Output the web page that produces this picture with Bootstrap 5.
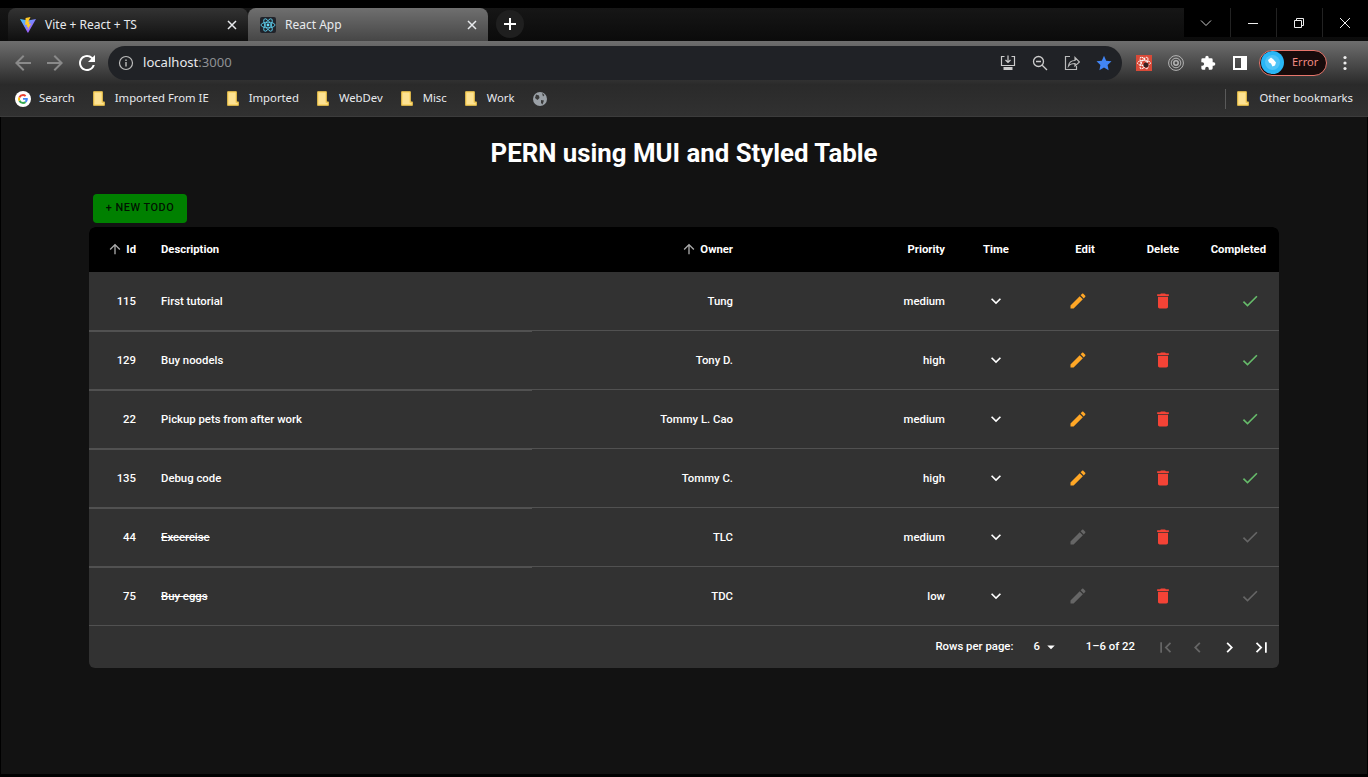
<!DOCTYPE html>
<html lang="en">
<head>
<meta charset="UTF-8">
<meta name="viewport" content="width=device-width, initial-scale=1.0">
<title>React App</title>
<link href="https://cdn.jsdelivr.net/npm/bootstrap@5.3.2/dist/css/bootstrap.min.css" rel="stylesheet">
<style>
html, body { height: 100%; }
body { background: #000; overflow: hidden; font-family: "Roboto", "Liberation Sans", sans-serif; }
.ui-font { font-family: "Noto Sans", "Liberation Sans", sans-serif; font-size: 12px; color: #e8eaed; white-space: nowrap; }

/* tab strip */
.tab-strip { height: 33px; margin-top: 8px; padding-left: 8px; background: linear-gradient(#161616, #0b0b0b); }
.tab-item { width: 240px; height: 33px; border-radius: 8px 8px 0 0; padding: 0 10px 0 12px; }
.tab-off { background: linear-gradient(#333, #0f0f0f); }
.tab-on { background: linear-gradient(#6f6f6f, #464646); }
.tab-fav { width: 16px; height: 16px; margin-right: 9px; flex: none; }
.tab-x { width: 12px; height: 12px; }
.new-tab { width: 28px; height: 28px; margin: 2px 0 0 8px; border-radius: 50%; background: #1f1f1f; }
.win-btns { height: 29px; background: #000; }
.win-btn { width: 46px; height: 29px; padding-right: 2px; border-left: 1px solid #222; }

/* toolbar */
.tool-bar { height: 43px; background: linear-gradient(#6e6e6e, #2b2b2b); padding-left: 11px; }
.tool-btn { width: 24px; height: 24px; margin-right: 8px; flex: none; }
.omni-box { width: 1014px; height: 34px; border-radius: 17px; background: #202226; margin: 0 6px 0 1px; padding: 0 10px 0 10px; }
.omni-icons { column-gap: 16px; }
.omni-text { font-size: 13.1px; margin-left: 9px; padding-top: 1px; }
.omni-port { color: #8e9094; }
.ext-btn { width: 32px; height: 32px; flex: none; }
.err-pill { width: 68px; height: 26px; margin: 0 8px 0 3px; border-radius: 13px; border: 1px solid #e8766c; background: #170b0b; color: #f28b82; font-size: 11px; padding-left: 1px; }
.err-avatar { width: 23px; height: 23px; margin-right: 8px; }

/* bookmarks */
.mark-bar { height: 33px; padding: 0 15px 3px; background: linear-gradient(#2a2a2a, #313131); border-bottom: 1px solid #3c3c3c; font-size: 11.3px; }
.mark-item { margin-right: 18px; }
.mark-ico { width: 12px; height: 15px; margin-right: 10px; flex: none; }
.mark-sep { width: 1px; height: 20px; background: #5a5a5a; margin-right: 11px; }

/* page */
.app-page { height: 657px; margin: 0 1px; background: #121212; padding: 0 88px; }
.app-title { font-size: 25.8px; font-weight: 700; line-height: 30px; color: #fff; text-align: center; padding-top: 21px; margin-bottom: 26px; }
.new-btn { display: block; width: 94px; height: 29px; margin: 0 0 4px 4px; padding: 0; border: 0; border-radius: 4px; background: #008000; color: rgba(0,0,0,.87); font-size: 10.9px; font-weight: 500; letter-spacing: .5px; }

/* table */
.todo-panel { width: 1190px; background: #323232; border-radius: 6px; overflow: hidden; }
.todo-table { table-layout: fixed; margin: 0; color: #fff; border-collapse: separate; border-spacing: 0; --bs-table-bg: transparent; --bs-table-color: #fff; }
.todo-table th, .todo-table td { font-size: 11.35px; line-height: 16px; padding: 0 12px; vertical-align: middle; border: 0; color: #fff; }
.todo-table th { height: 45px; background: #000; font-size: 11.3px; font-weight: 700; }
.todo-table td { height: 59px; font-weight: 500; border-bottom: 1px solid #515151; box-shadow: none; }
.todo-table td.thick-line { box-shadow: 0 1px 0 #515151; }
.todo-table td.done-text { text-decoration: line-through; }
.todo-table .id-cell, .todo-table .last-head { padding-right: 13px; }
.sort-ico { width: 16px; height: 16px; fill: #aaa; margin-right: 3px; vertical-align: -4px; }
.row-ico { width: 20px; height: 20px; display: block; }
.todo-table .edit-cell { padding-right: 26px; }
.edit-cell .row-ico { margin-left: auto; margin-right: auto; }
.todo-table .check-cell { padding-right: 19px; }
.ico-edit { fill: #ffa726; }
.ico-del { fill: #f44336; }
.ico-check { fill: #66bb6a; }
.ico-off { fill: #666; }
.ico-white { fill: #fff; }
.pager-bar { height: 42px; font-size: 11.35px; font-weight: 500; color: #fff; padding-right: 7px; }
.pager-btn { width: 21px; height: 21px; margin-left: 11px; }
.pager-select { margin: 0 26px 0 20px; }
.pager-caret { width: 18px; height: 18px; margin-left: 2px; fill: #fff; }
.pager-first { margin-left: 20px; }
</style>
</head>
<body>
<svg class="d-none">
    <symbol id="i-edit" viewBox="0 0 24 24"><path d="M3 17.25V21h3.75L17.81 9.94l-3.75-3.75L3 17.25zM20.71 7.04c.39-.39.39-1.02 0-1.41l-2.34-2.34c-.39-.39-1.02-.39-1.41 0l-1.83 1.83 3.75 3.75 1.83-1.83z"/></symbol>
    <symbol id="i-del" viewBox="0 0 24 24"><path d="M6 19c0 1.1.9 2 2 2h8c1.1 0 2-.9 2-2V7H6v12zM19 4h-3.5l-1-1h-5l-1 1H5v2h14V4z"/></symbol>
    <symbol id="i-check" viewBox="0 0 24 24"><path d="M9 16.17 4.83 12l-1.42 1.41L9 19 21 7l-1.41-1.41z"/></symbol>
    <symbol id="i-more" viewBox="0 0 24 24"><path d="M16.59 8.59 12 13.17 7.41 8.59 6 10l6 6 6-6z"/></symbol>
    <symbol id="i-up" viewBox="0 0 24 24"><path d="M4 12l1.41 1.41L11 7.83V20h2V7.83l5.58 5.59L20 12l-8-8-8 8z"/></symbol>
    <symbol id="i-folder" viewBox="0 0 12 15"><path d="M.8.8h8.400v10.400h2v3H.8z" fill="#fde293" stroke="#f7cb4d" stroke-width="1.200" stroke-linejoin="round"/></symbol>
</svg>

<div class="d-flex tab-strip">
    <div class="d-flex align-items-center tab-item tab-off">
        <svg class="tab-fav" viewBox="0 0 16 16"><defs><linearGradient id="vg" x1="0" y1="0" x2="1" y2="1"><stop offset="0" stop-color="#41d1ff"/><stop offset="1" stop-color="#bd34fe"/></linearGradient></defs><path d="M0 2l8 1.500L16 2 8.300 15.500q-.4.500-.7 0z" fill="url(#vg)"/><path d="M10.500 0L5.600 1l-.4 7 2-.400-.5 2.500 1.500-.400-.7 3.500 3.500-6.500-2 .400.700-2.500-1.600.300z" fill="#ffca28"/></svg>
        <span class="ui-font flex-grow-1">Vite + React + TS</span>
        <svg class="tab-x" viewBox="0 0 12 12"><path d="M2 2l8 8M10 2l-8 8" stroke="#e8eaed" stroke-width="1.500"/></svg>
    </div>
    <div class="d-flex align-items-center tab-item tab-on">
        <svg class="tab-fav" viewBox="0 0 16 16"><rect width="16" height="16" rx="2" fill="#20232a"/><g fill="none" stroke="#61dafb" stroke-width=".8"><ellipse cx="8" cy="8" rx="7" ry="2.800"/><ellipse cx="8" cy="8" rx="7" ry="2.800" transform="rotate(60 8 8)"/><ellipse cx="8" cy="8" rx="7" ry="2.800" transform="rotate(120 8 8)"/></g><circle cx="8" cy="8" r="1.400" fill="#61dafb"/></svg>
        <span class="ui-font flex-grow-1">React App</span>
        <svg class="tab-x" viewBox="0 0 12 12"><path d="M2 2l8 8M10 2l-8 8" stroke="#e8eaed" stroke-width="1.500"/></svg>
    </div>
    <div class="d-flex align-items-center justify-content-center new-tab">
        <svg width="14" height="14" viewBox="0 0 14 14"><path d="M7 1v12M1 7h12" stroke="#fff" stroke-width="2"/></svg>
    </div>
    <div class="d-flex win-btns ms-auto">
        <div class="d-flex align-items-center justify-content-center win-btn border-0"><svg width="12" height="8" viewBox="0 0 12 8"><path d="M1 1.500l5 5 5-5" fill="none" stroke="#ccc"/></svg></div>
        <div class="d-flex align-items-center justify-content-center win-btn"><svg width="12" height="12" viewBox="0 0 12 12"><path d="M1 6.500h10" stroke="#eee"/></svg></div>
        <div class="d-flex align-items-center justify-content-center win-btn"><svg width="12" height="12" viewBox="0 0 12 12"><path d="M1.500 3.500h7v7h-7zM3.500 3V1.500h7v7H9" fill="none" stroke="#eee"/></svg></div>
        <div class="d-flex align-items-center justify-content-center win-btn"><svg width="12" height="12" viewBox="0 0 12 12"><path d="M1 1l10 10M11 1L1 11" stroke="#eee"/></svg></div>
    </div>
</div>

<div class="d-flex align-items-center tool-bar">
    <svg class="tool-btn" viewBox="0 0 24 24"><path d="M20 11H7.830l5.590-5.590L12 4l-8 8 8 8 1.410-1.410L7.830 13H20z" fill="#8a8a8a"/></svg>
    <svg class="tool-btn" viewBox="0 0 24 24"><path d="M4 11h12.170l-5.590-5.590L12 4l8 8-8 8-1.410-1.410L16.170 13H4z" fill="#8a8a8a"/></svg>
    <svg class="tool-btn" viewBox="0 0 24 24"><path d="M17.650 6.350A7.958 7.958 0 0 0 12 4c-4.420 0-7.990 3.580-7.990 8s3.570 8 7.990 8c3.730 0 6.840-2.550 7.730-6h-2.080A5.990 5.990 0 0 1 12 18c-3.310 0-6-2.690-6-6s2.690-6 6-6c1.660 0 3.140.69 4.220 1.780L13 11h7V4z" fill="#fff"/></svg>
    <div class="d-flex align-items-center omni-box">
        <svg width="16" height="16" viewBox="0 0 16 16"><circle cx="8" cy="8" r="6.500" fill="none" stroke="#bdbdbd" stroke-width="1.200"/><path d="M8 7v4.500M8 4.500v1.500" stroke="#bdbdbd" stroke-width="1.400"/></svg>
        <span class="ui-font omni-text flex-grow-1">localhost<span class="omni-port">:3000</span></span>
        <div class="d-flex align-items-center omni-icons">
            <svg width="16" height="16" viewBox="0 0 16 16"><path d="M4.500 1.500h-3v9h13v-9h-3M8 .5v7M5.500 5L8 7.500 10.500 5" fill="none" stroke="#ccc" stroke-width="1.200"/><path d="M3.500 12h9v3h-9z" fill="#ccc"/></svg>
            <svg width="16" height="16" viewBox="0 0 16 16"><circle cx="6.500" cy="6.500" r="5" fill="none" stroke="#ccc" stroke-width="1.300"/><path d="M10.200 10.200L15 15M4 6.500h5" stroke="#ccc" stroke-width="1.300"/></svg>
            <svg width="16" height="16" viewBox="0 0 16 16"><path d="M6 1.500H1.500v13h11V11" fill="none" stroke="#bbb" stroke-width="1.200"/><path d="M4.500 11c.5-4 3-5.500 6.500-5.500V2.500L15.500 7 11 11V8.500C8.500 8.500 6 9 4.500 11z" fill="none" stroke="#bbb" stroke-width="1.200"/></svg>
            <svg width="16" height="16" viewBox="0 0 16 16"><path d="M8 .8l2.200 4.900 5.300.6-3.900 3.600 1 5.300L8 12.600l-4.600 2.600 1-5.300L.5 6.300l5.300-.6z" fill="#4285f4"/></svg>
        </div>
    </div>
    <div class="d-flex align-items-center justify-content-center ext-btn">
        <svg width="16" height="16" viewBox="0 0 16 16"><rect width="16" height="16" fill="#d84a38"/><g fill="none" stroke="#fff" stroke-width="1" stroke-dasharray="2 .6"><ellipse cx="8" cy="8" rx="6.500" ry="2.600"/><ellipse cx="8" cy="8" rx="6.500" ry="2.600" transform="rotate(60 8 8)"/><ellipse cx="8" cy="8" rx="6.500" ry="2.600" transform="rotate(120 8 8)"/></g><circle cx="10" cy="10" r="2.500" fill="#3a2020"/></svg>
    </div>
    <div class="d-flex align-items-center justify-content-center ext-btn">
        <svg width="16" height="16" viewBox="0 0 16 16" fill="none" stroke="#b5b5b5"><circle cx="8" cy="8" r="7.400"/><circle cx="8" cy="8" r="4.800"/><circle cx="8" cy="8" r="2.200" stroke-width="1.500"/></svg>
    </div>
    <div class="d-flex align-items-center justify-content-center ext-btn">
        <svg width="16" height="16" viewBox="0 0 24 24"><path d="M20.500 11H19V7a2 2 0 0 0-2-2h-4V3.500a2.500 2.500 0 0 0-5 0V5H4a2 2 0 0 0-2 2v3.800h1.500a2.700 2.700 0 0 1 0 5.400H2V20a2 2 0 0 0 2 2h3.800v-1.500a2.700 2.700 0 0 1 5.400 0V22H17a2 2 0 0 0 2-2v-4h1.500a2.500 2.500 0 0 0 0-5z" fill="#fff"/></svg>
    </div>
    <div class="d-flex align-items-center justify-content-center ext-btn">
        <svg width="14" height="14" viewBox="0 0 14 14"><path d="M1 1h12v12H1z" fill="none" stroke="#fff" stroke-width="2"/><path d="M8 1h5v12H8z" fill="#fff"/></svg>
    </div>
    <div class="d-flex align-items-center ui-font err-pill">
        <svg class="err-avatar" viewBox="0 0 23 23"><circle cx="11.500" cy="11.500" r="11.500" fill="#29b6f6"/><circle cx="11.500" cy="11.500" r="7.500" fill="#4fc3f7"/><path d="M7 9l3-2.500 2.500 2 2.500 3-1 3-2.500 1-1.500-3-2-1z" fill="#fff"/></svg>
        <span>Error</span>
    </div>
    <svg width="20" height="20" viewBox="0 0 20 20"><circle cx="10" cy="4.500" r="1.600" fill="#eee"/><circle cx="10" cy="10" r="1.600" fill="#eee"/><circle cx="10" cy="15.500" r="1.600" fill="#eee"/></svg>
</div>

<div class="d-flex align-items-center mark-bar ui-font">
    <div class="d-flex align-items-center mark-item">
        <svg width="16" height="16" viewBox="0 0 16 16" class="me-2"><circle cx="8" cy="8" r="8" fill="#fff"/><path d="M12.800 8.200c0-.4 0-.8-.1-1.200H8v1.800h2.700a2.300 2.300 0 0 1-1 1.500l1.500 1.200c.9-.8 1.600-2.200 1.600-3.300z" fill="#4285f4"/><path d="M8 13c1.300 0 2.400-.4 3.200-1.200l-1.500-1.200c-.5.300-1 .5-1.700.5a3 3 0 0 1-2.800-2L3.600 10.200A4.900 4.900 0 0 0 8 13z" fill="#34a853"/><path d="M5.200 9.100a3 3 0 0 1 0-2L3.600 5.800a4.900 4.900 0 0 0 0 4.400z" fill="#fbbc05"/><path d="M8 5c.8 0 1.400.3 1.900.8l1.400-1.400A4.800 4.800 0 0 0 8 3a4.900 4.900 0 0 0-4.400 2.800l1.600 1.300A3 3 0 0 1 8 5z" fill="#ea4335"/></svg>
        Search
    </div>
    <div class="d-flex align-items-center mark-item"><svg class="mark-ico"><use href="#i-folder"/></svg>Imported From IE</div>
    <div class="d-flex align-items-center mark-item"><svg class="mark-ico"><use href="#i-folder"/></svg>Imported</div>
    <div class="d-flex align-items-center mark-item"><svg class="mark-ico"><use href="#i-folder"/></svg>WebDev</div>
    <div class="d-flex align-items-center mark-item"><svg class="mark-ico"><use href="#i-folder"/></svg>Misc</div>
    <div class="d-flex align-items-center mark-item"><svg class="mark-ico"><use href="#i-folder"/></svg>Work</div>
    <svg width="14" height="14" viewBox="0 0 14 14"><circle cx="7" cy="7" r="7" fill="#9aa0a6"/><path d="M3 2.500l3 1 .5 2.500-2 2-2.500-2zM8 8l3 .5L9.500 12.500 8 11zM9 1l2.500 2L10 4.500z" fill="#3a3a3a"/></svg>
    <div class="mark-sep ms-auto"></div>
    <div class="d-flex align-items-center"><svg class="mark-ico"><use href="#i-folder"/></svg>Other bookmarks</div>
</div>

<div class="app-page">
    <h1 class="app-title">PERN using MUI and Styled Table</h1>
    <button class="new-btn" type="button">+ NEW TODO</button>

    <div class="todo-panel">
        <table class="table todo-table">
            <colgroup>
                <col style="width:60px"><col style="width:383px"><col style="width:213px"><col style="width:212px">
                <col style="width:78px"><col style="width:100px"><col style="width:56px"><col style="width:88px">
            </colgroup>
            <thead>
                <tr>
                    <th class="text-end id-cell"><svg class="sort-ico"><use href="#i-up"/></svg>Id</th>
                    <th>Description</th>
                    <th class="text-end"><svg class="sort-ico"><use href="#i-up"/></svg>Owner</th>
                    <th class="text-end">Priority</th>
                    <th class="text-center">Time</th>
                    <th class="text-center">Edit</th>
                    <th class="text-center px-0">Delete</th>
                    <th class="text-end last-head">Completed</th>
                </tr>
            </thead>
            <tbody>
                <tr>
                    <td class="text-end thick-line id-cell">115</td><td class="thick-line">First tutorial</td><td class="text-end">Tung</td><td class="text-end">medium</td>
                    <td><svg class="row-ico ico-white mx-auto"><use href="#i-more"/></svg></td>
                    <td class="edit-cell"><svg class="row-ico ico-edit"><use href="#i-edit"/></svg></td>
                    <td><svg class="row-ico ico-del mx-auto"><use href="#i-del"/></svg></td>
                    <td class="check-cell"><svg class="row-ico ico-check ms-auto"><use href="#i-check"/></svg></td>
                </tr>
                <tr>
                    <td class="text-end thick-line id-cell">129</td><td class="thick-line">Buy noodels</td><td class="text-end">Tony D.</td><td class="text-end">high</td>
                    <td><svg class="row-ico ico-white mx-auto"><use href="#i-more"/></svg></td>
                    <td class="edit-cell"><svg class="row-ico ico-edit"><use href="#i-edit"/></svg></td>
                    <td><svg class="row-ico ico-del mx-auto"><use href="#i-del"/></svg></td>
                    <td class="check-cell"><svg class="row-ico ico-check ms-auto"><use href="#i-check"/></svg></td>
                </tr>
                <tr>
                    <td class="text-end thick-line id-cell">22</td><td class="thick-line">Pickup pets from after work</td><td class="text-end">Tommy L. Cao</td><td class="text-end">medium</td>
                    <td><svg class="row-ico ico-white mx-auto"><use href="#i-more"/></svg></td>
                    <td class="edit-cell"><svg class="row-ico ico-edit"><use href="#i-edit"/></svg></td>
                    <td><svg class="row-ico ico-del mx-auto"><use href="#i-del"/></svg></td>
                    <td class="check-cell"><svg class="row-ico ico-check ms-auto"><use href="#i-check"/></svg></td>
                </tr>
                <tr>
                    <td class="text-end thick-line id-cell">135</td><td class="thick-line">Debug code</td><td class="text-end">Tommy C.</td><td class="text-end">high</td>
                    <td><svg class="row-ico ico-white mx-auto"><use href="#i-more"/></svg></td>
                    <td class="edit-cell"><svg class="row-ico ico-edit"><use href="#i-edit"/></svg></td>
                    <td><svg class="row-ico ico-del mx-auto"><use href="#i-del"/></svg></td>
                    <td class="check-cell"><svg class="row-ico ico-check ms-auto"><use href="#i-check"/></svg></td>
                </tr>
                <tr>
                    <td class="text-end thick-line id-cell">44</td><td class="thick-line done-text">Excercise</td><td class="text-end">TLC</td><td class="text-end">medium</td>
                    <td><svg class="row-ico ico-white mx-auto"><use href="#i-more"/></svg></td>
                    <td class="edit-cell"><svg class="row-ico ico-off"><use href="#i-edit"/></svg></td>
                    <td><svg class="row-ico ico-del mx-auto"><use href="#i-del"/></svg></td>
                    <td class="check-cell"><svg class="row-ico ico-off ms-auto"><use href="#i-check"/></svg></td>
                </tr>
                <tr>
                    <td class="text-end id-cell">75</td><td class="done-text">Buy eggs</td><td class="text-end">TDC</td><td class="text-end">low</td>
                    <td><svg class="row-ico ico-white mx-auto"><use href="#i-more"/></svg></td>
                    <td class="edit-cell"><svg class="row-ico ico-off"><use href="#i-edit"/></svg></td>
                    <td><svg class="row-ico ico-del mx-auto"><use href="#i-del"/></svg></td>
                    <td class="check-cell"><svg class="row-ico ico-off ms-auto"><use href="#i-check"/></svg></td>
                </tr>
            </tbody>
        </table>
        <div class="d-flex align-items-center justify-content-end pager-bar">
            <span>Rows per page:</span>
            <span class="d-flex align-items-center pager-select">6<svg class="pager-caret" viewBox="0 0 24 24"><path d="M7 10l5 5 5-5z"/></svg></span>
            <span>1–6 of 22</span>
            <svg class="pager-btn ico-off pager-first" viewBox="0 0 24 24"><path d="M18.410 16.590 13.820 12l4.590-4.590L17 6l-6 6 6 6zM6 6h2v12H6z"/></svg>
            <svg class="pager-btn ico-off" viewBox="0 0 24 24"><path d="M15.410 16.590 10.830 12l4.580-4.590L14 6l-6 6 6 6 1.410-1.410z"/></svg>
            <svg class="pager-btn ico-white" viewBox="0 0 24 24"><path d="M8.590 16.590 13.170 12 8.590 7.410 10 6l6 6-6 6-1.410-1.410z"/></svg>
            <svg class="pager-btn ico-white" viewBox="0 0 24 24"><path d="M5.590 7.410 10.180 12l-4.590 4.590L7 18l6-6-6-6zM16 6h2v12h-2z"/></svg>
        </div>
    </div>
</div>
<script src="https://cdn.jsdelivr.net/npm/bootstrap@5.3.2/dist/js/bootstrap.bundle.min.js"></script>
</body>
</html>
